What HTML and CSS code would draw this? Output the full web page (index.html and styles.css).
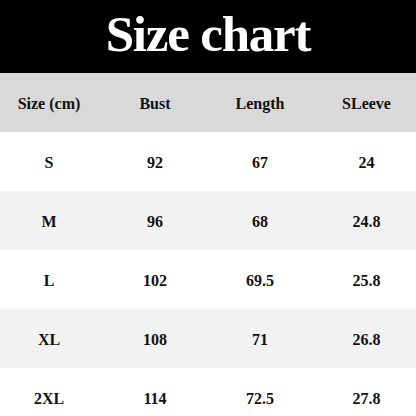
FILE: index.html
```html
<!DOCTYPE html>
<html>
<head>
<meta charset="utf-8">
<link rel="stylesheet" href="styles.css">
</head>
<body>
<div class="page">
  <div class="title">Size chart</div>
  <div class="row head"><span>Size (cm)</span><span>Bust</span><span>Length</span><span>SLeeve</span></div>
  <div class="row"><span>S</span><span>92</span><span>67</span><span>24</span></div>
  <div class="row alt"><span>M</span><span>96</span><span>68</span><span>24.8</span></div>
  <div class="row"><span>L</span><span>102</span><span>69.5</span><span>25.8</span></div>
  <div class="row alt"><span>XL</span><span>108</span><span>71</span><span>26.8</span></div>
  <div class="row"><span>2XL</span><span>114</span><span>72.5</span><span>27.8</span></div>
</div>
</body>
</html>
```
FILE: styles.css
```css
html, body { margin: 0; padding: 0; background: #fff; }
.page {
  width: 416px;
  height: 416px;
  overflow: hidden;
  font-family: "Liberation Serif", "Times New Roman", serif;
  font-weight: bold;
  color: #111;
}
.title {
  height: 73px;
  background: #000;
  color: #fff;
  font-size: 51px;
  letter-spacing: -1.2px;
  line-height: 69px;
  text-align: center;
}
.row {
  display: grid;
  grid-template-columns: 98px 114px 96px 108px;
  height: 59px;
  box-sizing: border-box;
  padding-top: 3px;
  align-items: center;
  font-size: 16px;
  background: #fff;
}
.row span { text-align: center; }
.row span:last-child { padding-left: 9px; }
.row.head { background: #d9d9d9; }
.row.alt { background: #f2f2f2; }
```
